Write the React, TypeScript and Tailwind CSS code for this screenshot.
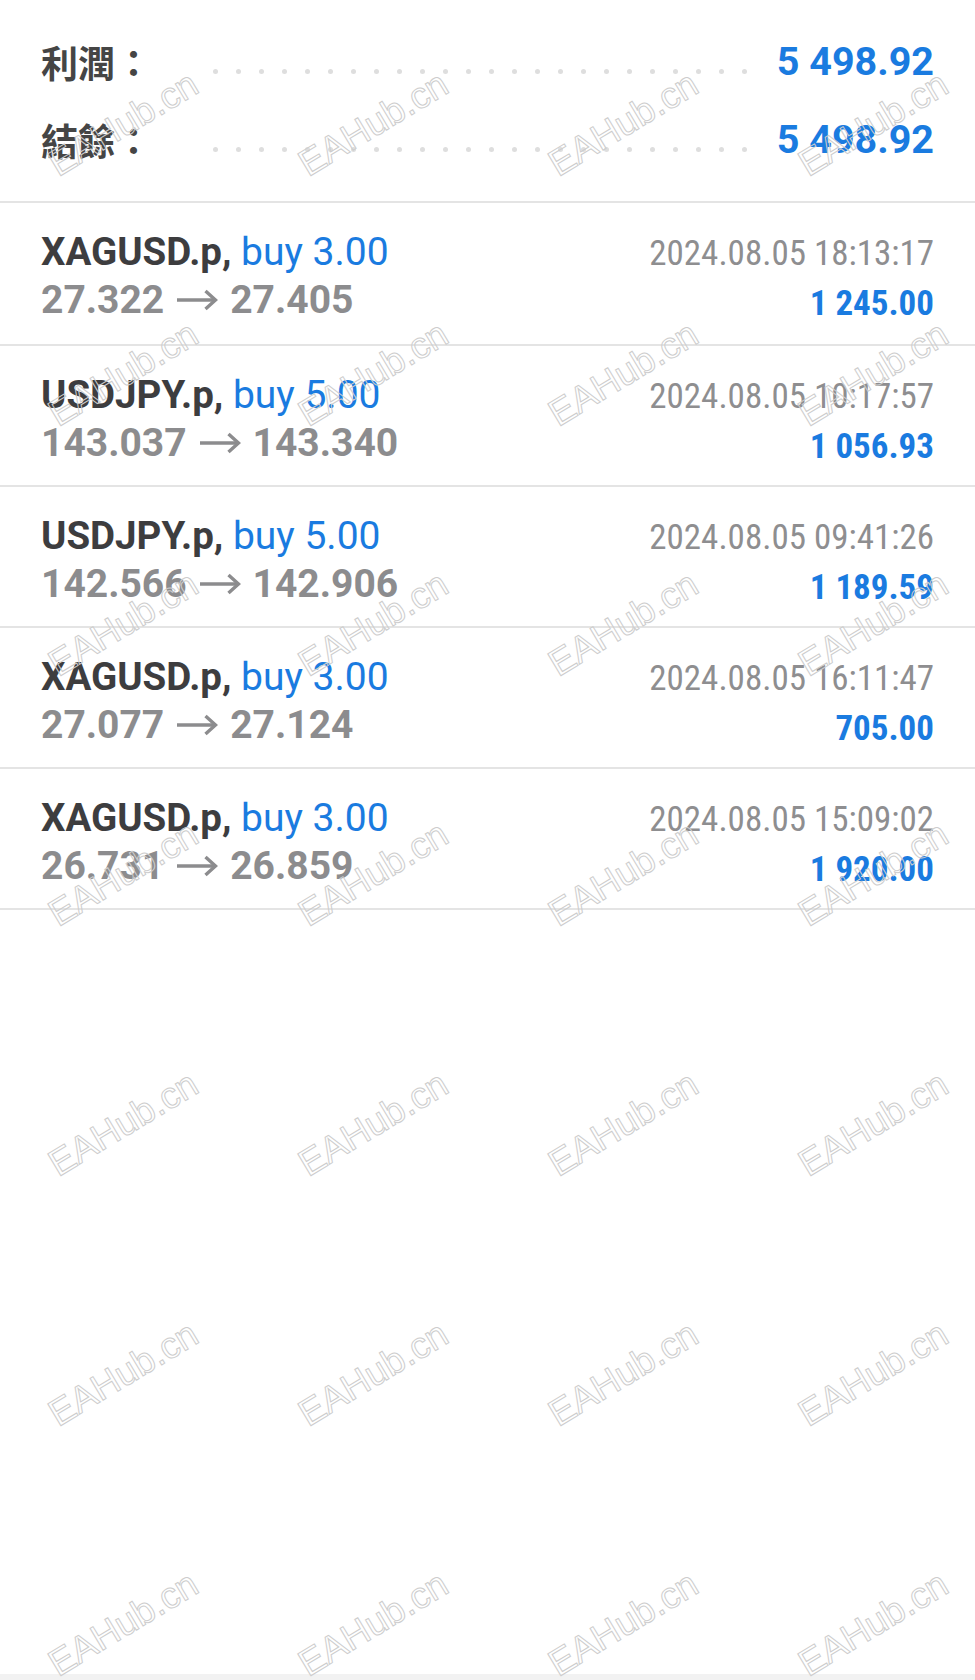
import React from "react";

type Trade = {
  symbol: string;
  side: string;
  open: string;
  close: string;
  time: string;
  profit: string;
};

const trades: Trade[] = [
  { symbol: "XAGUSD.p,", side: "buy 3.00", open: "27.322", close: "27.405", time: "2024.08.05 18:13:17", profit: "1 245.00" },
  { symbol: "USDJPY.p,", side: "buy 5.00", open: "143.037", close: "143.340", time: "2024.08.05 10:17:57", profit: "1 056.93" },
  { symbol: "USDJPY.p,", side: "buy 5.00", open: "142.566", close: "142.906", time: "2024.08.05 09:41:26", profit: "1 189.59" },
  { symbol: "XAGUSD.p,", side: "buy 3.00", open: "27.077", close: "27.124", time: "2024.08.05 16:11:47", profit: "705.00" },
  { symbol: "XAGUSD.p,", side: "buy 3.00", open: "26.731", close: "26.859", time: "2024.08.05 15:09:02", profit: "1 920.00" },
];

const dots = Array.from({ length: 24 }, (_, i) => i);
const marks = Array.from({ length: 28 }, (_, i) => i);

function Arrow() {
  return (
    <svg width="42" height="22" viewBox="0 0 42 22" className="mx-[12px] shrink-0" fill="none">
      <path d="M1 11H39" stroke="#8c8c8e" strokeWidth="3.4" />
      <path d="M29.5 2L39.5 11L29.5 20" stroke="#8c8c8e" strokeWidth="3.4" strokeLinejoin="miter" />
    </svg>
  );
}

function SummaryRow({ label, value, className }: { label: string; value: string; className?: string }) {
  return (
    <div className={`flex h-[50px] items-center pl-[41px] pr-[41px] ${className ?? ""}`}>
      <div className="w-[172px] shrink-0 font-['Noto_Sans_CJK_TC','Noto_Sans_CJK_SC',sans-serif] text-[37px] font-bold leading-none text-[#454545]">
        {label}
      </div>
      <div className="mt-[18px] flex gap-[18px]">
        {dots.map((d) => (
          <span key={d} className="block h-[5px] w-[5px] rounded-full bg-[#dedede]" />
        ))}
      </div>
      <div className="ml-auto font-['Roboto',sans-serif] text-[39.5px] font-bold leading-none text-[#1a7be0]">
        {value}
      </div>
    </div>
  );
}

function TradeRow({ t, first }: { t: Trade; first: boolean }) {
  return (
    <div
      className={`flex justify-between border-b-2 border-[#e4e4e4] pl-[41px] pr-[41px] ${
        first ? "h-[143px]" : "h-[141px]"
      }`}
    >
      <div className="pt-[25px] font-['Roboto',sans-serif]">
        <div className="h-[48px] whitespace-nowrap text-[38.5px] leading-[48px]">
          <span className="font-bold text-[#3d3d3f]">{t.symbol} </span>
          <span className="text-[39px] text-[#1a7be0]">{t.side}</span>
        </div>
        <div className="flex h-[48px] items-center whitespace-nowrap text-[39px] font-bold leading-[48px] text-[#8c8c8e]">
          <span>{t.open}</span>
          <Arrow />
          <span>{t.close}</span>
        </div>
      </div>
      <div className="pt-[26px] text-right font-['Roboto_Condensed','Roboto',sans-serif] leading-[50px]">
        <div className="whitespace-nowrap text-[35px] text-[#8e8e90]">{t.time}</div>
        <div className="whitespace-nowrap text-[35px] font-bold text-[#1a7be0]">{t.profit}</div>
      </div>
    </div>
  );
}

export default function App() {
  return (
    <div className="relative flex min-h-[1680px] w-full flex-col overflow-hidden bg-white">
      <div className="h-[203px] border-b-2 border-[#e4e4e4] pt-[37px]">
        <SummaryRow label="利潤：" value="5 498.92" />
        <SummaryRow label="結餘：" value="5 498.92" className="mt-[28px]" />
      </div>
      {trades.map((t, i) => (
        <TradeRow key={i} t={t} first={i === 0} />
      ))}
      <div className="flex-1" />
      <div className="h-[6px] bg-[#f2f2f2]" />

      <div className="pointer-events-none absolute left-[-2px] top-[-1px] grid grid-cols-[repeat(4,250px)] grid-rows-[repeat(7,250px)]">
        {marks.map((m) => (
          <div key={m} className="flex items-center justify-center">
            <span className="-rotate-[31deg] whitespace-nowrap font-['Liberation_Sans',sans-serif] text-[37px] text-transparent [-webkit-text-stroke:1px_#cdcdcd]">
              EAHub.cn
            </span>
          </div>
        ))}
      </div>
    </div>
  );
}
